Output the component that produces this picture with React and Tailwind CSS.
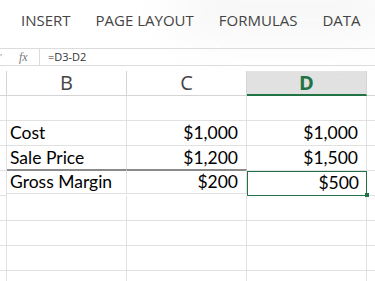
import { useState } from 'react'

const tabs = ['INSERT', 'PAGE LAYOUT', 'FORMULAS', 'DATA']

const rows = [
  { b: '', c: '', d: '' },
  { b: 'Cost', c: '$1,000', d: '$1,000' },
  { b: 'Sale Price', c: '$1,200', d: '$1,500' },
  { b: 'Gross Margin', c: '$200', d: '$500', total: true },
  { b: '', c: '', d: '' },
  { b: '', c: '', d: '' },
  { b: '', c: '', d: '' },
  { b: '', c: '', d: '' },
]

export default function App() {
  const [formula] = useState('=D3-D2')

  return (
    <div className="w-[375px] h-[281px] overflow-hidden bg-white relative">
      {/* faint smudge at the top right of the ribbon */}
      <div className="absolute right-[-20px] top-[-10px] w-[220px] h-[40px] rounded-full bg-[#eeeeee] blur-xl opacity-70" />

      <div className="relative h-[48px] flex items-start pt-[9px] pl-[21px] gap-[25px] text-[15px] text-[#444] font-['Open_Sans',sans-serif]">
        {tabs.map((t) => (
          <span key={t}>{t}</span>
        ))}
      </div>

      <div className="relative h-[18px] flex border-t border-b border-[#dcdcdc]">
        <div className="w-[40px] flex items-center relative border-r border-[#dcdcdc]">
          <span className="absolute left-0 top-[2px] text-[9px] text-[#888]">'</span>
          <span className="ml-[19px] italic text-[12px] text-[#777] font-['Liberation_Serif',serif] leading-none">fx</span>
        </div>
        <div className="flex items-center pl-[8px] text-[11px] text-[#333] font-['Open_Sans',sans-serif]">
          {formula}
        </div>
      </div>

      <div className="h-[5px]" />

      <div className="grid grid-cols-[7px_120px_120px_120px_8px] font-['Lato',sans-serif]">
        {/* column headers */}
        <div className="h-[25px] border-r border-b border-[#d4d4d4]" />
        <div className="h-[25px] flex items-center justify-center border-r border-b border-[#d4d4d4] text-[20px] text-[#444] font-['Open_Sans',sans-serif]">B</div>
        <div className="h-[25px] flex items-center justify-center border-r border-b border-[#d4d4d4] text-[20px] text-[#444] font-['Open_Sans',sans-serif]">C</div>
        <div className="h-[25px] flex items-center justify-center border-r border-[#d4d4d4] border-b-2 border-b-[#217346] bg-[#e1e1e1] text-[20px] text-[#217346] font-['Open_Sans',sans-serif] font-bold">D</div>
        <div className="h-[25px] border-b border-[#d4d4d4]" />

        {rows.map((r, i) => (
          <Row key={i} r={r} />
        ))}
      </div>
    </div>
  )
}

function Row({ r }) {
  const top = r.total ? 'border-t-2 border-t-[#8a8a8a] -mt-[2px]' : ''
  return (
    <>
      <div className="h-[25px] border-r border-b border-[#e1e1e1]" />
      <div className={`h-[25px] flex items-center pl-[3px] border-r border-b border-[#e1e1e1] text-[17.5px] text-black ${top}`}>{r.b}</div>
      <div className={`h-[25px] flex items-center justify-end pr-[8px] border-r border-b border-[#e1e1e1] text-[17.5px] text-black ${top}`}>{r.c}</div>
      {r.total ? (
        <div className="relative h-[25px] flex items-center justify-end pr-[8px] text-[17.5px] text-black outline outline-1 outline-[#217346] -outline-offset-1 border-b border-[#e1e1e1]">
          {r.d}
          <span className="absolute right-[-2px] bottom-[-2px] w-[4px] h-[4px] bg-[#217346]" />
        </div>
      ) : (
        <div className="h-[25px] flex items-center justify-end pr-[8px] border-r border-b border-[#e1e1e1] text-[17.5px] text-black">{r.d}</div>
      )}
      <div className="h-[25px] border-b border-[#e1e1e1]" />
    </>
  )
}
